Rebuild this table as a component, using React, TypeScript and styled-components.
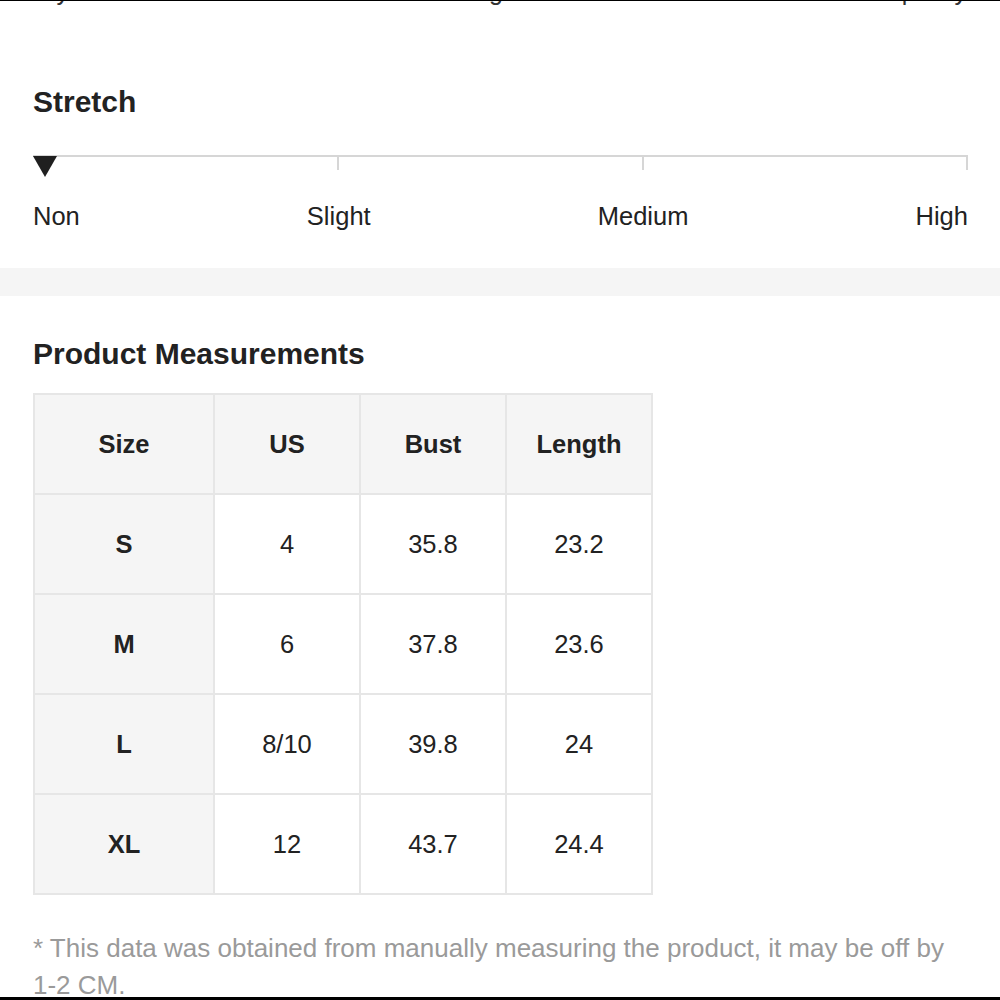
import React from "react";
import styled, { createGlobalStyle } from "styled-components";

const Global = createGlobalStyle`
  html, body { margin: 0; padding: 0; background: #fff; }
  body { overflow: hidden; font-family: "Liberation Sans", Arial, Helvetica, sans-serif; color: #222; }
  * { box-sizing: border-box; }
`;

const Page = styled.div`
  height: 1000px;
  border-top: 1px solid #000;
  border-bottom: 3px solid #000;
  overflow: hidden;
`;

const Viewport = styled.div`
  height: 996px;
  overflow: hidden;
`;

const ClippedRow = styled.div`
  height: 10px;
  overflow: hidden;
  padding: 0 33px;
`;

const ClippedInner = styled.div`
  display: flex;
  justify-content: space-between;
  margin-top: -23px;
  font-size: 25px;
  line-height: 26px;
  color: #333;
`;

const Section = styled.section<{ $top: number; $bottom: number }>`
  padding: ${(p) => p.$top}px 32px ${(p) => p.$bottom}px 33px;
  background: #fff;
`;

const Divider = styled.div`
  height: 28px;
  background: #f5f5f5;
`;

const Heading = styled.h2`
  margin: 0;
  font-size: 30px;
  line-height: 30px;
  font-weight: 700;
  color: #222;
`;

const Track = styled.div`
  position: relative;
  margin-top: 38px;
  height: 2px;
  background: #d6d6d6;
`;

const Tick = styled.span<{ $left: number }>`
  position: absolute;
  top: 0;
  left: ${(p) => p.$left}px;
  width: 2px;
  height: 15px;
  background: #d6d6d6;
`;

const Pointer = styled.span`
  position: absolute;
  top: 1px;
  left: 0;
  width: 0;
  height: 0;
  border-left: 12.5px solid transparent;
  border-right: 12.5px solid transparent;
  border-top: 21px solid #1f1f1f;
`;

const Labels = styled.div`
  margin-top: 46px;
  display: flex;
  justify-content: space-between;
  font-size: 25.5px;
  line-height: 26px;
  color: #222;
`;

const Grid = styled.div`
  margin-top: 24px;
  width: 620px;
  display: grid;
  grid-template-columns: 178px 144px 144px 144px;
  grid-auto-rows: 98px;
  gap: 2px;
  padding: 2px;
  background: #e6e6e6;
`;

const Cell = styled.div<{ $head?: boolean; $shade?: boolean }>`
  display: flex;
  align-items: center;
  justify-content: center;
  background: ${(p) => (p.$shade ? "#f5f5f5" : "#fff")};
  font-size: 25.5px;
  font-weight: ${(p) => (p.$head ? 700 : 400)};
  color: #222;
`;

const Note = styled.p`
  margin: 35px 0 0;
  font-size: 26px;
  line-height: 37px;
  color: #9a9a9a;
`;

const labels = ["Non", "Slight", "Medium", "High"];
const headers = ["Size", "US", "Bust", "Length"];
const rows = [
  ["S", "4", "35.8", "23.2"],
  ["M", "6", "37.8", "23.6"],
  ["L", "8/10", "39.8", "24"],
  ["XL", "12", "43.7", "24.4"],
];

export default function App() {
  return (
    <>
      <Global />
      <Page>
        <Viewport>
          <ClippedRow>
            <ClippedInner>
              <span>Style</span>
              <span>Length</span>
              <span>Opacity</span>
            </ClippedInner>
          </ClippedRow>
          <Section $top={76} $bottom={39}>
            <Heading>Stretch</Heading>
            <Track>
              <Tick $left={304} />
              <Tick $left={609} />
              <Tick $left={933} />
              <Pointer />
            </Track>
            <Labels>
              {labels.map((l) => (
                <span key={l}>{l}</span>
              ))}
            </Labels>
          </Section>
          <Divider />
          <Section $top={43} $bottom={0}>
            <Heading>Product Measurements</Heading>
            <Grid>
              {headers.map((h) => (
                <Cell key={h} $head $shade>
                  {h}
                </Cell>
              ))}
              {rows.map((r) =>
                r.map((v, i) => (
                  <Cell key={r[0] + i} $head={i === 0} $shade={i === 0}>
                    {v}
                  </Cell>
                ))
              )}
            </Grid>
            <Note>
              * This data was obtained from manually measuring the product, it may be off by 1-2 CM.
            </Note>
          </Section>
        </Viewport>
      </Page>
    </>
  );
}
